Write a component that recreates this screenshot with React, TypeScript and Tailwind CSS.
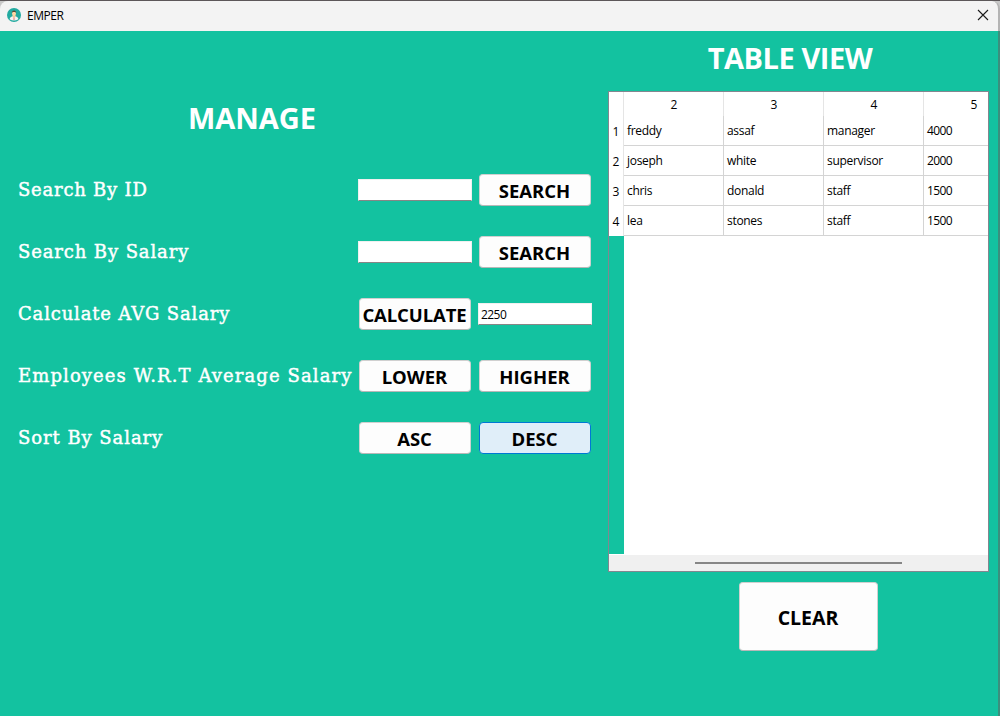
import type { ReactNode } from "react";

const UI = "font-['Open_Sans','Noto_Sans',sans-serif]";

function Button({ children, active = false, size = "h-8 w-28 text-[18.5px]", className = "" }: { children: ReactNode; active?: boolean; size?: string; className?: string }) {
  const tone = active
    ? "border-[#0078d4] bg-[#e0eef9]"
    : "border-[#d0d0d0] border-b-[#b8b8b8] bg-[#fdfdfd]";
  return (
    <button type="button" className={`flex items-center justify-center whitespace-nowrap rounded-[4px] border pt-[3px] pr-px font-bold leading-none text-black ${size} ${tone} ${className}`}>
      {children}
    </button>
  );
}

function Field({ value = "" }: { value?: string }) {
  return (
    <input
      readOnly
      value={value}
      className="h-[22px] w-[114px] border border-[#f0f0f0] border-b-[#868686] bg-white px-[2px] text-[12px] tracking-[-0.55px] text-black outline-none"
    />
  );
}

function Row({ label, spacing, children }: { label: string; spacing: string; children: ReactNode }) {
  return (
    <div className="grid h-[62px] grid-cols-[334px_114px_114px] items-center gap-x-1.5 pl-3">
      <span className={`whitespace-nowrap font-['DejaVu_Serif',serif] text-[18px] leading-6 text-white [-webkit-text-stroke:0.45px_white] ${spacing}`}>{label}</span>
      {children}
    </div>
  );
}

const employees = [
  ["freddy", "assaf", "manager", "4000"],
  ["joseph", "white", "supervisor", "2000"],
  ["chris", "donald", "staff", "1500"],
  ["lea", "stones", "staff", "1500"],
];

function EmployeeTable() {
  return (
    <div className="flex h-[481px] w-[381px] flex-col overflow-hidden border border-[#828790] bg-white text-[12px] text-black">
      <div className="flex h-6 shrink-0">
        <div className="w-[15px] shrink-0 border-r border-[#e5e5e5]" />
        {["2", "3", "4", "5"].map((n) => (
          <div key={n} className="flex w-[100px] shrink-0 items-center justify-center border-r border-[#e5e5e5] pt-px pl-px">{n}</div>
        ))}
      </div>
      {employees.map((row, i) => (
        <div key={i} className="flex h-[30px] shrink-0">
          <div className="flex w-[15px] shrink-0 items-center justify-center border-r border-[#e5e5e5] pt-px">{i + 1}</div>
          {row.map((cell, j) => (
            <div key={j} className={`flex w-[100px] shrink-0 items-center border-r border-b border-[#d4d4d4] pt-px pl-[3px] ${j === 3 ? "tracking-[-0.6px]" : "tracking-[-0.3px]"}`}>{cell}</div>
          ))}
        </div>
      ))}
      <div className="flex h-[318px] shrink-0">
        <div className="w-[15px] bg-[#13c2a0]" />
      </div>
      <div className="mt-px flex h-4 shrink-0 items-center bg-[#f0f0f0] pl-[86px]">
        <div className="h-0.5 w-[207px] bg-[#868686]" />
      </div>
    </div>
  );
}

export default function App() {
  return (
    <div className={`flex h-[716px] w-[1000px] flex-col overflow-hidden border-t border-[#5c5759] bg-[#c8c8c8] ${UI}`}>
      <header className="flex h-[30px] shrink-0 items-center justify-between rounded-t-lg border-r-2 border-[#b4b4b4] bg-[#f3f3f3] pr-[9px] pl-[7px]">
        <div className="flex items-center gap-[6px]">
          <svg className="-mt-0.5" width="14" height="14" viewBox="0 0 14 14">
            <circle cx="7" cy="7" r="7" fill="#22aaa0" />
            <path d="M2.6 11.3Q3.2 8.3 7 8.1Q10.8 8.3 11.4 11.3Q7 13.8 2.6 11.3Z" fill="#f2f2f2" />
            <path d="M5.7 7h2.6v2L7 10 5.7 9Z" fill="#f4c795" />
            <ellipse cx="7" cy="5.4" rx="2" ry="2.5" fill="#ffd6a4" />
            <path d="M4.8 5.1Q4.8 2.4 7 2.4Q9.2 2.4 9.2 5.1L8.3 4.1H5.7Z" fill="#5b4a35" />
            <path d="M6.6 9.4h.8l.3 2.2-.7.7-.7-.7Z" fill="#e9847b" />
          </svg>
          <span className="text-[12px] tracking-[-0.45px] text-black">EMPER</span>
        </div>
        <svg className="-mt-0.5" width="12" height="12" viewBox="0 0 12 12" stroke="#1a1a1a" strokeWidth="1.1">
          <path d="M1 1l10 10M11 1L1 11" />
        </svg>
      </header>
      <main className="flex min-h-0 flex-1 border-r-2 border-[#3c8f7d] bg-[#13c2a0]">
        <section className="w-[608px] shrink-0 pt-[67px] pl-[6px]">
          <h1 className="mb-[21px] h-10 w-[492px] text-center text-[29px] font-bold leading-10 text-white">MANAGE</h1>
          <Row label="Search By ID" spacing="tracking-[0.77px]">
            <Field />
            <Button className="ml-px">SEARCH</Button>
          </Row>
          <Row label="Search By Salary" spacing="tracking-[0.88px]">
            <Field />
            <Button className="ml-px">SEARCH</Button>
          </Row>
          <Row label="Calculate AVG Salary" spacing="tracking-[0.83px]">
            <Button className="ml-px tracking-[-0.1px]">CALCULATE</Button>
            <Field value="2250" />
          </Row>
          <Row label="Employees W.R.T Average Salary" spacing="tracking-[1.1px]">
            <Button className="ml-px">LOWER</Button>
            <Button className="ml-px">HIGHER</Button>
          </Row>
          <Row label="Sort By Salary" spacing="tracking-[0.93px]">
            <Button className="ml-px">ASC</Button>
            <Button active className="ml-px">DESC</Button>
          </Row>
        </section>
        <section className="w-[390px] pt-[7px]">
          <h1 className="mb-[13px] h-10 w-[364px] text-center text-[29px] font-bold leading-10 tracking-[-0.45px] text-white">TABLE VIEW</h1>
          <EmployeeTable />
          <Button size="h-[69px] w-[139px] text-[19.5px]" className="mt-[10px] ml-[131px]">CLEAR</Button>
        </section>
      </main>
    </div>
  );
}
